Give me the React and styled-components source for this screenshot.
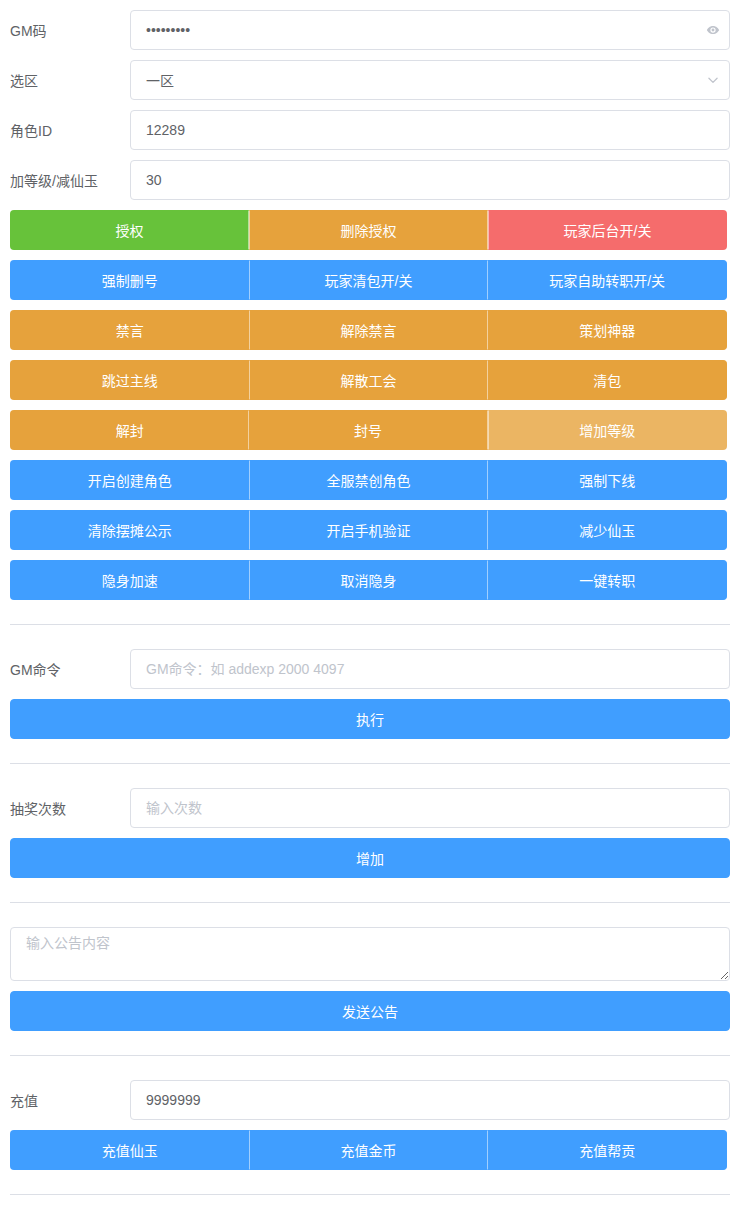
import React from "react";
import styled, { createGlobalStyle } from "styled-components";

const GlobalStyle = createGlobalStyle`
  body {
    margin: 0;
    background: #fff;
    font-family: "Liberation Sans", "Noto Sans CJK SC", sans-serif;
    color: #606266;
  }
`;

const COLORS = {
  primary: "#409eff",
  success: "#67c23a",
  warning: "#e6a23c",
  danger: "#f56c6c",
  muted: "#ebb563",
};

const Page = styled.div`
  padding: 10px 7px 10px 10px;
  display: flex;
  flex-direction: column;
  gap: 10px;
`;

const Row = styled.div`
  display: flex;
  align-items: center;
  height: ${p => (p.$tall ? "54px" : "40px")};
`;

const Label = styled.label`
  width: 120px;
  flex-shrink: 0;
  font-size: 14px;
  color: #606266;
`;

const Field = styled.div`
  position: relative;
  flex: 1;
  height: 100%;
`;

const Input = styled.input`
  box-sizing: border-box;
  width: 100%;
  height: 40px;
  border: 1px solid #dcdfe6;
  border-radius: 4px;
  padding: 0 15px;
  font-family: inherit;
  font-size: 14px;
  color: #606266;
  outline: none;
  background: #fff;
  &::placeholder {
    color: #c0c4cc;
  }
`;

const TextArea = styled.textarea`
  box-sizing: border-box;
  width: 100%;
  height: 54px;
  border: 1px solid #dcdfe6;
  border-radius: 4px;
  padding: 5px 15px;
  font-family: inherit;
  font-size: 14px;
  line-height: 1.5;
  color: #606266;
  outline: none;
  display: block;
  &::placeholder {
    color: #c0c4cc;
  }
`;

const Suffix = styled.span`
  position: absolute;
  right: 10px;
  top: 0;
  height: 40px;
  display: flex;
  align-items: center;
  color: #c0c4cc;
`;

const Group = styled.div`
  display: flex;
  width: 717px;
`;

const Button = styled.button`
  flex: ${p => (p.$block ? "none" : "1")};
  width: ${p => (p.$block ? "100%" : "auto")};
  height: 40px;
  border: 1px solid ${p => COLORS[p.$type]};
  background: ${p => COLORS[p.$type]};
  color: #fff;
  font-family: inherit;
  font-size: 14px;
  border-radius: 4px;
  padding: 0 20px;
  cursor: pointer;

  ${Group} > & {
    border-radius: 0;
    border-left-color: rgba(255, 255, 255, 0.5);
    border-right-color: rgba(255, 255, 255, 0.5);
  }
  ${Group} > &:first-child {
    border-radius: 4px 0 0 4px;
    border-left-color: ${p => COLORS[p.$type]};
  }
  ${Group} > &:last-child {
    border-radius: 0 4px 4px 0;
    border-right-color: ${p => COLORS[p.$type]};
  }
  ${Group} > & + & {
    border-left: none;
  }
`;

const Divider = styled.hr`
  border: none;
  border-top: 1px solid #dcdfe6;
  margin: 14px 0;
  height: 0;
`;

const EyeIcon = () => (
  <svg width="14" height="14" viewBox="0 0 24 24" fill="currentColor">
    <path d="M12 5C6.5 5 2.7 9.2 1.5 12c1.2 2.8 5 7 10.5 7s9.3-4.2 10.5-7C21.3 9.2 17.5 5 12 5zm0 11.5a4.5 4.5 0 1 1 0-9 4.5 4.5 0 0 1 0 9zm0-7a2.5 2.5 0 1 0 0 5 2.5 2.5 0 0 0 0-5z" />
  </svg>
);

const ArrowIcon = () => (
  <svg width="14" height="14" viewBox="0 0 24 24" fill="none" stroke="currentColor" strokeWidth="2.2" strokeLinecap="round" strokeLinejoin="round">
    <path d="M5 9l7 7 7-7" />
  </svg>
);

const groups = [
  [["授权", "success"], ["删除授权", "warning"], ["玩家后台开/关", "danger"]],
  [["强制删号", "primary"], ["玩家清包开/关", "primary"], ["玩家自助转职开/关", "primary"]],
  [["禁言", "warning"], ["解除禁言", "warning"], ["策划神器", "warning"]],
  [["跳过主线", "warning"], ["解散工会", "warning"], ["清包", "warning"]],
  [["解封", "warning"], ["封号", "warning"], ["增加等级", "muted"]],
  [["开启创建角色", "primary"], ["全服禁创角色", "primary"], ["强制下线", "primary"]],
  [["清除摆摊公示", "primary"], ["开启手机验证", "primary"], ["减少仙玉", "primary"]],
  [["隐身加速", "primary"], ["取消隐身", "primary"], ["一键转职", "primary"]],
];

const ButtonGroup = ({ items }) => (
  <Group>
    {items.map(([text, type]) => (
      <Button key={text} $type={type}>{text}</Button>
    ))}
  </Group>
);

export default function App() {
  return (
    <Page>
      <GlobalStyle />
      <Row>
        <Label>GM码</Label>
        <Field>
          <Input type="password" defaultValue="123456789" />
          <Suffix><EyeIcon /></Suffix>
        </Field>
      </Row>
      <Row>
        <Label>选区</Label>
        <Field>
          <Input readOnly defaultValue="一区" />
          <Suffix><ArrowIcon /></Suffix>
        </Field>
      </Row>
      <Row>
        <Label>角色ID</Label>
        <Field><Input defaultValue="12289" /></Field>
      </Row>
      <Row>
        <Label>加等级/减仙玉</Label>
        <Field><Input defaultValue="30" /></Field>
      </Row>
      {groups.map((g, i) => (
        <ButtonGroup key={i} items={g} />
      ))}

      <Divider />
      <Row>
        <Label>GM命令</Label>
        <Field><Input placeholder="GM命令：如 addexp 2000 4097" /></Field>
      </Row>
      <Button $block $type="primary">执行</Button>

      <Divider />
      <Row>
        <Label>抽奖次数</Label>
        <Field><Input placeholder="输入次数" /></Field>
      </Row>
      <Button $block $type="primary">增加</Button>

      <Divider />
      <Row $tall>
        <Field><TextArea placeholder="输入公告内容" /></Field>
      </Row>
      <Button $block $type="primary">发送公告</Button>

      <Divider />
      <Row>
        <Label>充值</Label>
        <Field><Input defaultValue="9999999" /></Field>
      </Row>
      <ButtonGroup
        items={[["充值仙玉", "primary"], ["充值金币", "primary"], ["充值帮贡", "primary"]]}
      />
      <Divider />
    </Page>
  );
}
